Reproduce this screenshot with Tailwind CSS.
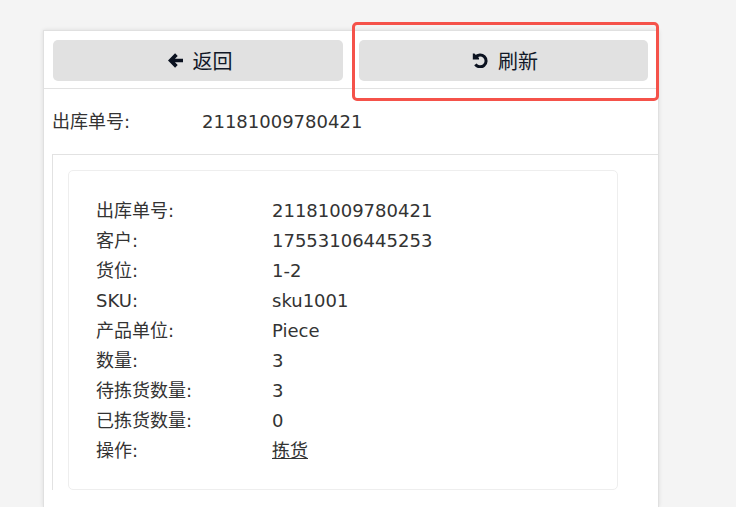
<!DOCTYPE html>
<html><head><meta charset="utf-8"><script src="https://cdn.jsdelivr.net/npm/@tailwindcss/browser@4"></script></head>
<body class="bg-[#f4f4f4] h-[507px] overflow-hidden relative font-['DejaVu_Sans','Noto_Sans_CJK_SC',sans-serif] text-[18px] leading-[30px] text-[#333]">
<div class="ml-[43px] w-[616px] h-[477px] bg-white border-x border-t border-[#e0e0e0] shadow-[0_0_4px_rgba(0,0,0,0.1)] relative top-[30px]">
  <div class="flex gap-4 h-[58px] pt-[9px] pl-[9px] pr-[10px] border-b border-[#e2e2e2]">
    <button class="flex-1 h-[41px] bg-[#e1e1e1] rounded-[5px] flex items-center justify-center gap-[10px] pl-[4px] text-[20px] text-[#111827]">
      <svg class="w-[15px] h-[15px]" viewBox="0 0 15 15"><path d="M8.4 1.6 L2.6 7.5 L8.4 13.4 M3.5 7.5 H15" fill="none" stroke="#0b1220" stroke-width="3.7"/></svg><span class="pt-[2px]">返回</span>
    </button>
    <button class="flex-1 h-[41px] bg-[#e1e1e1] rounded-[5px] flex items-center justify-center gap-[10px] pl-[3px] text-[20px] text-[#111827]">
      <svg class="w-[16px] h-[15px]" viewBox="0 0 16 15"><path d="M3.6 4.2 A5.9 5.9 0 1 1 3.4 11.4" fill="none" stroke="#0b1220" stroke-width="3"/><path d="M0.8 0.4 H2.4 L7 5 V6.6 H0.8 Z" fill="#0b1220"/></svg><span class="pt-[2px]">刷新</span>
    </button>
  </div>
  <div class="flex h-[65px] pl-[8px] items-center"><span class="w-[150px]">出库单号:</span><span>21181009780421</span></div>
  <div class="ml-[8px] border-l border-t border-[#e2e2e2] pl-[15px] pt-[15px]">
    <div class="w-[550px] h-[320px] border border-[#eeeeee] rounded-[5px] pl-[27px] pt-[25px]">
      <div class="grid grid-cols-[176px_1fr]">
        <span>出库单号:</span><span>21181009780421</span>
        <span>客户:</span><span>17553106445253</span>
        <span>货位:</span><span>1-2</span>
        <span>SKU:</span><span>sku1001</span>
        <span>产品单位:</span><span>Piece</span>
        <span>数量:</span><span>3</span>
        <span>待拣货数量:</span><span>3</span>
        <span>已拣货数量:</span><span>0</span>
        <span>操作:</span><span><a class="underline">拣货</a></span>
      </div>
    </div>
  </div>
</div>
<div class="absolute left-[352px] top-[22px] w-[307px] h-[79px] border-[3px] border-[#f5524a] rounded-[5px]"></div>
</body></html>
